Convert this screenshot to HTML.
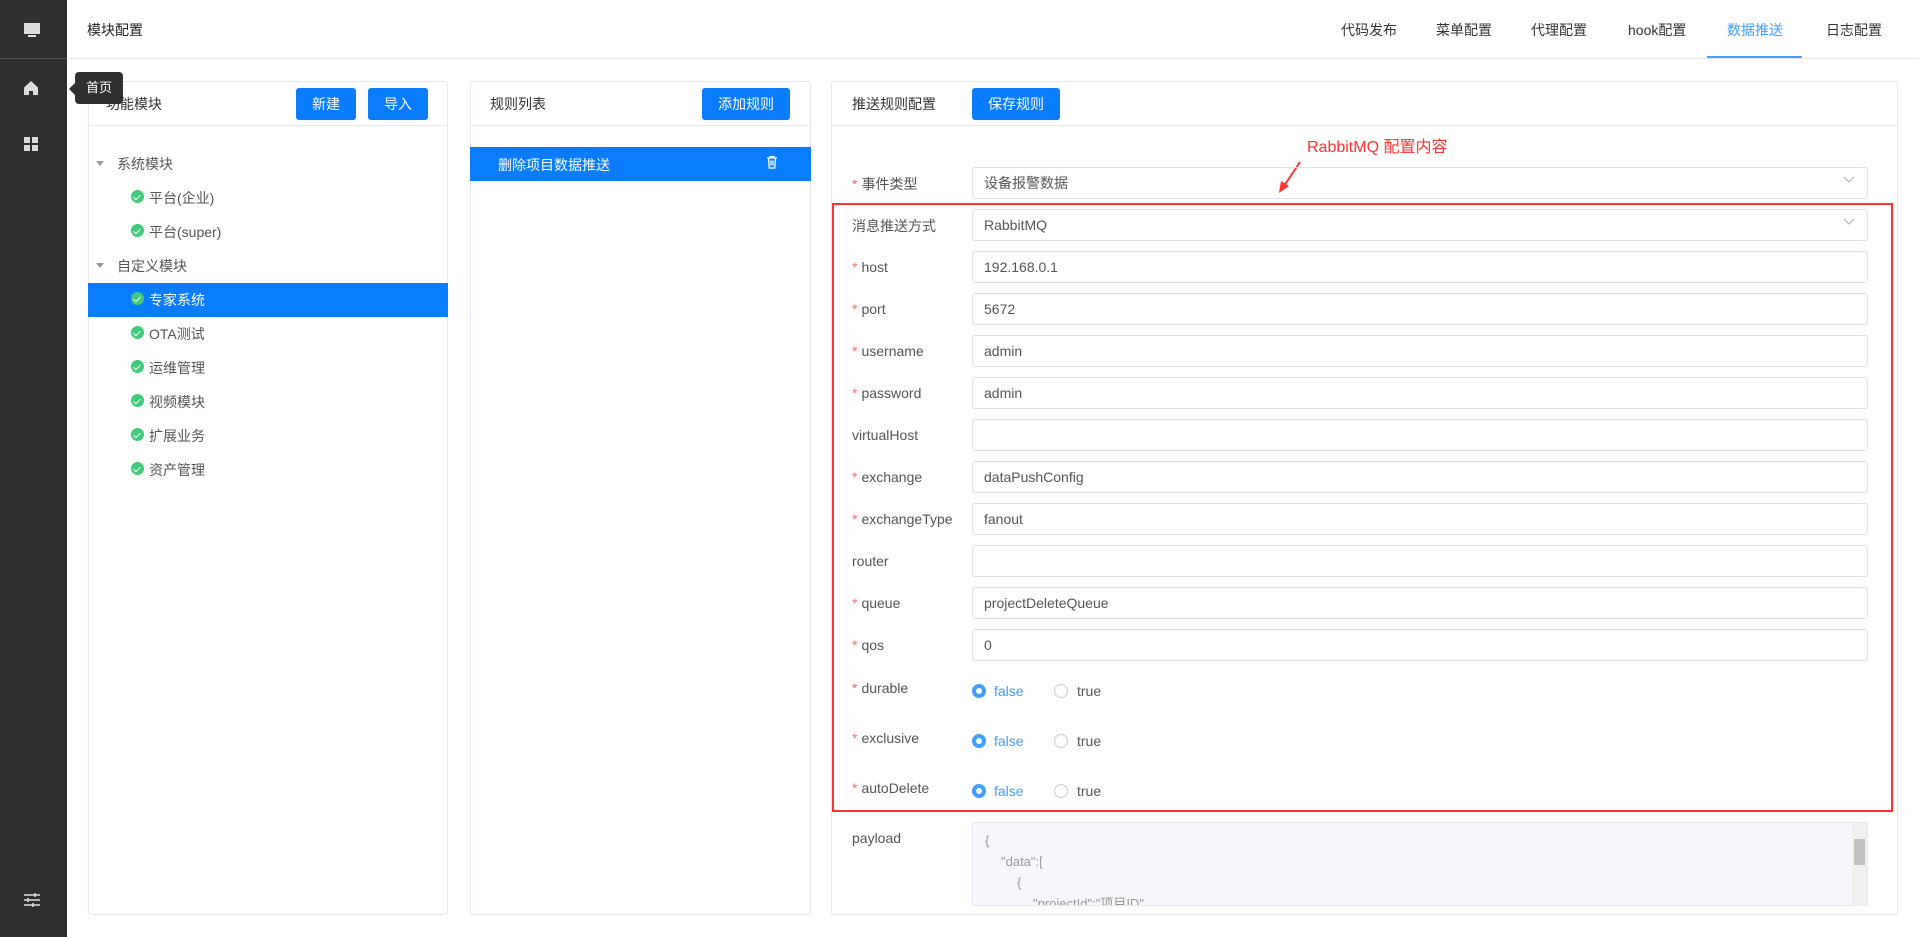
<!DOCTYPE html>
<html><head><meta charset="utf-8"><style>
*{box-sizing:border-box;margin:0;padding:0}
body{width:1919px;height:937px;overflow:hidden;background:#fff;font-family:"Liberation Sans","Noto Sans CJK SC",sans-serif;font-size:14px;color:#333;position:relative}
.abs{position:absolute}
.side{left:0;top:0;width:67px;height:937px;background:#2f2f2f}
.panel{border:1px solid #e4e7ed;border-radius:3px;background:#fff}
.btn{position:absolute;background:#0a7cff;color:#fff;border-radius:3px;text-align:center;font-size:14px}
.lbl{position:absolute;left:852px;font-size:14px;color:#555}
.lbl i{color:#f56c6c;font-style:normal;margin-right:4px}
.inp{position:absolute;left:972px;width:896px;height:32px;border:1px solid #dcdfe6;border-radius:3px;padding-left:11px;line-height:30px;color:#555;font-size:14px}
.tab{position:absolute;top:20px;font-size:14px;color:#333}
.tr{position:absolute;font-size:14px;color:#555}
.ck{position:absolute;width:13px;height:13px;border-radius:50%;background:#3fcb7a}
.ck:after{content:"";position:absolute;left:4px;top:2.5px;width:3px;height:6px;border:solid #fff;border-width:0 1.5px 1.5px 0;transform:rotate(45deg)}
.rad{position:absolute;width:14px;height:14px;border-radius:50%}
</style></head><body>
<div class="abs side"></div>
<div class="abs" style="left:0;top:58px;width:67px;height:1px;background:#555"></div>
<svg class="abs" style="left:22px;top:21px" width="20" height="18" viewBox="0 0 20 18"><rect x="2" y="2" width="16" height="11" fill="#ddd"/><rect x="6" y="14" width="8" height="2" fill="#ddd"/></svg>
<svg class="abs" style="left:22px;top:79px" width="18" height="18" viewBox="0 0 18 18"><path d="M9 2L2 8.5V16h5v-4h4v4h5V8.5z" fill="#ddd"/></svg>
<svg class="abs" style="left:23px;top:136px" width="16" height="16" viewBox="0 0 16 16"><rect x="1" y="1" width="6" height="6" fill="#ddd"/><rect x="9" y="1" width="6" height="6" fill="#ddd"/><rect x="1" y="9" width="6" height="6" fill="#ddd"/><rect x="9" y="9" width="6" height="6" fill="#ddd"/></svg>
<svg class="abs" style="left:22px;top:891px" width="20" height="18" viewBox="0 0 20 18" stroke="#ddd" stroke-width="1.6" fill="none"><path d="M2 4h16M2 9h16M2 14h16"/><path d="M13 2v4M6 7v4M11 12v4"/></svg>

<div class="abs" style="left:87px;top:20px;font-size:14px;color:#222">模块配置</div>
<div class="abs" style="left:67px;top:58px;width:1852px;height:1px;background:#e4e7ed"></div>
<div class="tab" style="left:1341px">代码发布</div>
<div class="tab" style="left:1436px">菜单配置</div>
<div class="tab" style="left:1531px">代理配置</div>
<div class="tab" style="left:1628px">hook配置</div>
<div class="tab" style="left:1727px;color:#409eff">数据推送</div>
<div class="tab" style="left:1826px">日志配置</div>
<div class="abs" style="left:1707px;top:56px;width:95px;height:2px;background:#409eff"></div>

<!-- panel 1 -->
<div class="abs panel" style="left:88px;top:81px;width:360px;height:834px"></div>
<div class="abs" style="left:88px;top:125px;width:360px;height:1px;background:#e4e7ed"></div>
<div class="abs" style="left:106px;top:94px;color:#333">功能模块</div>
<div class="abs" style="left:75px;top:72px;width:48px;height:32px;background:#303030;border-radius:4px;color:#fff;font-size:13px;line-height:32px;text-align:center">首页</div>
<div class="abs" style="left:69px;top:83px;border:6px solid transparent;border-right-color:#303030;border-left:0"></div>
<div class="btn" style="left:296px;top:88px;width:60px;height:32px;line-height:32px">新建</div>
<div class="btn" style="left:368px;top:88px;width:60px;height:32px;line-height:32px">导入</div>
<div class="abs" style="left:96px;top:161px;border:4px solid transparent;border-top:5px solid #999;border-bottom:0"></div>
<div class="tr" style="left:117px;top:154px">系统模块</div>
<div class="ck" style="left:131px;top:190px"></div><div class="tr" style="left:149px;top:188px">平台(企业)</div>
<div class="ck" style="left:131px;top:224px"></div><div class="tr" style="left:149px;top:222px">平台(super)</div>
<div class="abs" style="left:96px;top:263px;border:4px solid transparent;border-top:5px solid #999;border-bottom:0"></div>
<div class="tr" style="left:117px;top:256px">自定义模块</div>
<div class="abs" style="left:88px;top:283px;width:360px;height:34px;background:#0a7cff"></div>
<div class="ck" style="left:131px;top:292px"></div><div class="tr" style="left:149px;top:290px;color:#fff">专家系统</div>
<div class="ck" style="left:131px;top:326px"></div><div class="tr" style="left:149px;top:324px">OTA测试</div>
<div class="ck" style="left:131px;top:360px"></div><div class="tr" style="left:149px;top:358px">运维管理</div>
<div class="ck" style="left:131px;top:394px"></div><div class="tr" style="left:149px;top:392px">视频模块</div>
<div class="ck" style="left:131px;top:428px"></div><div class="tr" style="left:149px;top:426px">扩展业务</div>
<div class="ck" style="left:131px;top:462px"></div><div class="tr" style="left:149px;top:460px">资产管理</div>

<!-- panel 2 -->
<div class="abs panel" style="left:470px;top:81px;width:341px;height:834px"></div>
<div class="abs" style="left:470px;top:125px;width:341px;height:1px;background:#e4e7ed"></div>
<div class="abs" style="left:490px;top:94px">规则列表</div>
<div class="btn" style="left:702px;top:88px;width:88px;height:32px;line-height:32px">添加规则</div>
<div class="abs" style="left:470px;top:147px;width:341px;height:34px;background:#0a7cff"></div>
<div class="abs" style="left:498px;top:155px;color:#fff">删除项目数据推送</div>
<svg class="abs" style="left:766px;top:155px" width="12" height="14" viewBox="0 0 12 14" fill="none" stroke="#fff" stroke-width="1.3"><path d="M1 3h10M4 3V1.5h4V3M2.5 3l.7 10h5.6l.7-10M5 5.5v5M7 5.5v5"/></svg>

<!-- panel 3 -->
<div class="abs panel" style="left:831px;top:81px;width:1067px;height:834px"></div>
<div class="abs" style="left:831px;top:125px;width:1067px;height:1px;background:#e4e7ed"></div>
<div class="abs" style="left:852px;top:94px">推送规则配置</div>
<div class="btn" style="left:972px;top:88px;width:88px;height:32px;line-height:32px">保存规则</div>
<div class="abs" style="left:1307px;top:133px;color:#f33;font-size:16px">RabbitMQ 配置内容</div>
<svg class="abs" style="left:1270px;top:160px" width="40" height="36"><path d="M30 2L14 26" stroke="#f33" stroke-width="2"/><path d="M9 33l2-12 8 5z" fill="#f33"/></svg>

<div class="lbl" style="top:174px"><i>*</i>事件类型</div>
<div class="inp" style="top:167px">设备报警数据</div>

<div class="abs" style="left:832px;top:203px;width:1061px;height:609px;border:2px solid #f33"></div>
<div class="lbl" style="top:216px">消息推送方式</div>
<div class="inp" style="top:209px">RabbitMQ</div>
<svg class="abs" style="left:1843px;top:176px" width="12" height="8"><path d="M1 1l5 5 5-5" stroke="#aaa" fill="none"/></svg>
<svg class="abs" style="left:1843px;top:218px" width="12" height="8"><path d="M1 1l5 5 5-5" stroke="#aaa" fill="none"/></svg>

<div class="lbl" style="top:259px"><i>*</i>host</div><div class="inp" style="top:251px">192.168.0.1</div>
<div class="lbl" style="top:301px"><i>*</i>port</div><div class="inp" style="top:293px">5672</div>
<div class="lbl" style="top:343px"><i>*</i>username</div><div class="inp" style="top:335px">admin</div>
<div class="lbl" style="top:385px"><i>*</i>password</div><div class="inp" style="top:377px">admin</div>
<div class="lbl" style="top:427px">virtualHost</div><div class="inp" style="top:419px"></div>
<div class="lbl" style="top:469px"><i>*</i>exchange</div><div class="inp" style="top:461px">dataPushConfig</div>
<div class="lbl" style="top:511px"><i>*</i>exchangeType</div><div class="inp" style="top:503px">fanout</div>
<div class="lbl" style="top:553px">router</div><div class="inp" style="top:545px"></div>
<div class="lbl" style="top:595px"><i>*</i>queue</div><div class="inp" style="top:587px">projectDeleteQueue</div>
<div class="lbl" style="top:637px"><i>*</i>qos</div><div class="inp" style="top:629px">0</div>

<div class="lbl" style="top:680px"><i>*</i>durable</div>
<div class="lbl" style="top:730px"><i>*</i>exclusive</div>
<div class="lbl" style="top:780px"><i>*</i>autoDelete</div>
<div class="rad" style="left:972px;top:684px;border:4px solid #409eff;background:#fff"></div><div class="abs" style="left:994px;top:683px;color:#409eff">false</div>
<div class="rad" style="left:1054px;top:684px;border:1px solid #ccc"></div><div class="abs" style="left:1077px;top:683px;color:#555">true</div>
<div class="rad" style="left:972px;top:734px;border:4px solid #409eff;background:#fff"></div><div class="abs" style="left:994px;top:733px;color:#409eff">false</div>
<div class="rad" style="left:1054px;top:734px;border:1px solid #ccc"></div><div class="abs" style="left:1077px;top:733px;color:#555">true</div>
<div class="rad" style="left:972px;top:784px;border:4px solid #409eff;background:#fff"></div><div class="abs" style="left:994px;top:783px;color:#409eff">false</div>
<div class="rad" style="left:1054px;top:784px;border:1px solid #ccc"></div><div class="abs" style="left:1077px;top:783px;color:#555">true</div>

<div class="lbl" style="top:830px">payload</div>
<div class="abs" style="left:972px;top:822px;width:896px;height:84px;background:#f5f7fa;border:1px solid #e4e7ed;overflow:hidden;color:#999;font-size:13px;line-height:21px;padding:7px 12px">
<div>{</div><div style="padding-left:16px">"data":[</div><div style="padding-left:32px">{</div><div style="padding-left:48px">"projectId":"项目ID",</div></div>
<div class="abs" style="left:1852px;top:823px;width:15px;height:83px;background:#f0f0f0"></div>
<div class="abs" style="left:1854px;top:839px;width:11px;height:26px;background:#c1c1c1"></div>
</body></html>
